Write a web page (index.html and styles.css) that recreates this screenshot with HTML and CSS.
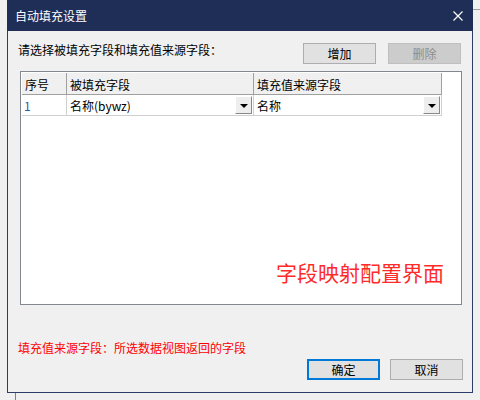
FILE: index.html
```html
<!DOCTYPE html>
<html lang="zh">
<head>
<meta charset="utf-8">
<link rel="stylesheet" href="styles.css">
</head>
<body>
<div class="desk">
  <div class="dialog">
    <div class="titlebar">
      <span class="title">自动填充设置</span>
      <svg class="close" width="10" height="10" viewBox="0 0 10 10"><path d="M0.5 0.5 L9.5 9.5 M9.5 0.5 L0.5 9.5" stroke="#ffffff" stroke-width="1.2" fill="none"/></svg>
    </div>
    <div class="content">
      <div class="toolbar">
        <span class="label">请选择被填充字段和填充值来源字段：</span>
        <button class="btn">增加</button>
        <button class="btn disabled">删除</button>
      </div>
      <div class="grid">
        <div class="row head">
          <div class="cell c1">序号</div>
          <div class="cell c2">被填充字段</div>
          <div class="cell c3">填充值来源字段</div>
        </div>
        <div class="row data">
          <div class="cell c1 num">1</div>
          <div class="cell c2 combo"><span>名称(bywz)</span><span class="drop"><svg width="8" height="4" viewBox="0 0 8 4"><path d="M0 0 H8 L4 4 Z" fill="#000"/></svg></span></div>
          <div class="cell c3 combo"><span>名称</span><span class="drop"><svg width="8" height="4" viewBox="0 0 8 4"><path d="M0 0 H8 L4 4 Z" fill="#000"/></svg></span></div>
        </div>
        <div class="note-big">字段映射配置界面</div>
      </div>
      <div class="note">填充值来源字段：所选数据视图返回的字段</div>
      <div class="actions">
        <button class="btn primary">确定</button>
        <button class="btn">取消</button>
      </div>
    </div>
  </div>
</div>
</body>
</html>
```

FILE: styles.css
```css
html, body {
  margin: 0;
  padding: 0;
}
body {
  background: #f0f0f0;
  width: 480px;
  height: 400px;
  overflow: hidden;
  font-family: "Noto Sans CJK SC", "Noto Sans", sans-serif;
  font-size: 12px;
  color: #000;
}
.desk {
  position: relative;
  width: 480px;
  height: 400px;
  padding-left: 7px;
  box-sizing: border-box;
}
.desk::before {
  content: "";
  position: absolute;
  left: 473px;
  top: 9px;
  width: 7px;
  height: 1px;
  background: #a0a0a0;
}
.desk::after {
  content: "";
  position: absolute;
  left: 15px;
  top: 393px;
  width: 1px;
  height: 7px;
  background: #808080;
}
.dialog {
  width: 466px;
  height: 393px;
  box-sizing: border-box;
  border: 1px solid #2d3d6b;
  border-top: none;
  background: #f0f0f0;
  display: flex;
  flex-direction: column;
}
.titlebar {
  height: 31px;
  flex: none;
  background: #1f2e57;
  display: flex;
  align-items: center;
  padding: 0 10px 0 8px;
  margin: 0 -1px;
}
.title {
  color: #ffffff;
  font-size: 12px;
  flex: 1;
  padding-bottom: 1px;
}
.content {
  flex: 1;
  display: flex;
  flex-direction: column;
  padding: 12px 10px 0 10px;
}
.toolbar {
  display: flex;
  align-items: flex-start;
  height: 21px;
  gap: 12px;
  margin-right: 1px;
}
.label {
  flex: 1;
  line-height: 16px;
  margin-top: -1px;
}
.btn {
  width: 73px;
  height: 21px;
  box-sizing: border-box;
  border: 1px solid #adadad;
  background: #e1e1e1;
  font-family: "Noto Sans CJK SC", "Noto Sans", sans-serif;
  font-size: 12px;
  color: #000;
  padding: 0;
  line-height: 18px;
}
.btn.disabled {
  background: #cccccc;
  border-color: #bfbfbf;
  color: #8d8d8d;
}
.btn.primary {
  border: 2px solid #0078d7;
  line-height: 16px;
}
.grid {
  position: relative;
  margin: 7px 0 0 2px;
  height: 234px;
  box-sizing: border-box;
  border: 1px solid #828790;
  padding: 1px;
  background: #ffffff;
}
.row {
  display: flex;
  width: 420px;
}
.head {
  height: 21px;
  background: #f0f0f0;
  border-bottom: 1px solid #a0a0a0;
}
.data {
  height: 20px;
  border-bottom: 1px solid #d0d0d0;
}
.cell {
  box-sizing: border-box;
  display: flex;
  align-items: center;
  padding-left: 3px;
  border-right: 1px solid #a0a0a0;
}
.data .cell {
  border-right-color: #d0d0d0;
}
.head .cell {
  padding-top: 1px;
}
.c1 { width: 45px; }
.c2 { width: 187px; }
.c3 { width: 188px; }
.num {
  color: #1f5fa8;
  padding-left: 2px;
}
.combo {
  justify-content: space-between;
  padding-right: 1px;
}
.drop {
  width: 17px;
  height: 18px;
  box-sizing: border-box;
  background: #eeeeee;
  border: 1px solid;
  border-color: #ffffff #8a8a8a #8a8a8a #ffffff;
  display: flex;
  align-items: center;
  justify-content: center;
}
.drop svg {
  display: block;
  margin-top: 1px;
}
.note-big {
  position: absolute;
  left: 255px;
  top: 188px;
  font-size: 21px;
  line-height: 25px;
  color: #ff2a2a;
}
.note {
  margin-top: 35px;
  color: #ff0000;
  line-height: 16px;
}
.actions {
  display: flex;
  justify-content: flex-end;
  gap: 10px;
  margin-top: 3px;
  margin-right: -1px;
}
```
